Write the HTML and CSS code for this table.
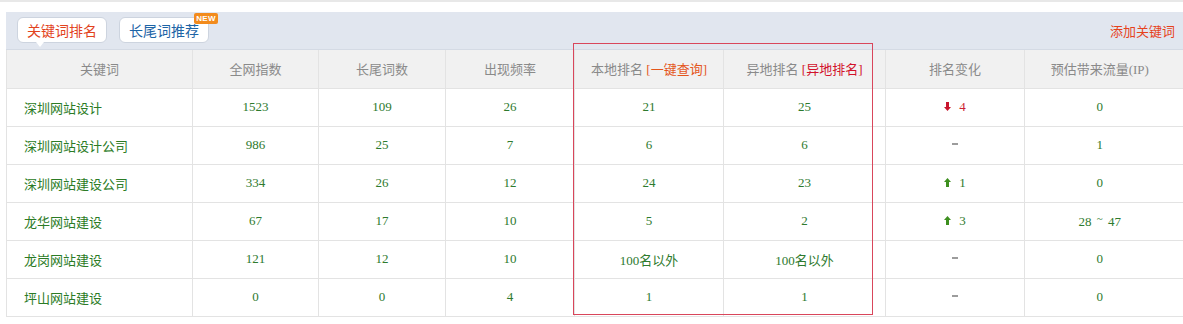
FILE: index.html
```html
<!DOCTYPE html>
<html lang="zh-CN">
<head>
<meta charset="utf-8">
<title>关键词排名</title>
<link rel="stylesheet" href="styles.css">
</head>
<body>
<div class="topbar"></div>
<div class="panel">
  <div class="tabbar">
    <div class="tabs">
      <a class="tab tab-active">关键词排名</a>
      <a class="tab tab-blue">长尾词推荐<span class="badge">NEW</span></a>
    </div>
    <a class="add-link">添加关键词</a>
  </div>
  <table class="rank">
    <colgroup>
      <col class="c1"><col class="c2"><col class="c3"><col class="c4"><col class="c5"><col class="c6"><col class="c7"><col class="c8">
    </colgroup>
    <thead>
      <tr>
        <th>关键词</th>
        <th>全网指数</th>
        <th>长尾词数</th>
        <th>出现频率</th>
        <th>本地排名 <span class="hl-orange">[一键查询]</span></th>
        <th>异地排名 <span class="hl-red">[异地排名]</span></th>
        <th>排名变化</th>
        <th class="last">预估带来流量(IP)</th>
      </tr>
    </thead>
    <tbody>
      <tr>
        <td class="kw">深圳网站设计</td><td>1523</td><td>109</td><td>26</td><td>21</td><td>25</td>
        <td><span class="chg down"><svg class="arrow" viewBox="0 0 7 9" width="7" height="9"><path d="M2 0H5V5H7L3.5 9L0 5H2Z"/></svg>4</span></td>
        <td class="last">0</td>
      </tr>
      <tr>
        <td class="kw">深圳网站设计公司</td><td>986</td><td>25</td><td>7</td><td>6</td><td>6</td>
        <td><span class="dash"></span></td>
        <td class="last">1</td>
      </tr>
      <tr>
        <td class="kw">深圳网站建设公司</td><td>334</td><td>26</td><td>12</td><td>24</td><td>23</td>
        <td><span class="chg up"><svg class="arrow" viewBox="0 0 7 9" width="7" height="9"><path d="M2 9H5V4H7L3.5 0L0 4H2Z"/></svg>1</span></td>
        <td class="last">0</td>
      </tr>
      <tr>
        <td class="kw">龙华网站建设</td><td>67</td><td>17</td><td>10</td><td>5</td><td>2</td>
        <td><span class="chg up"><svg class="arrow" viewBox="0 0 7 9" width="7" height="9"><path d="M2 9H5V4H7L3.5 0L0 4H2Z"/></svg>3</span></td>
        <td class="last">28 <span class="tilde">~</span> 47</td>
      </tr>
      <tr>
        <td class="kw">龙岗网站建设</td><td>121</td><td>12</td><td>10</td><td>100名以外</td><td>100名以外</td>
        <td><span class="dash"></span></td>
        <td class="last">0</td>
      </tr>
      <tr>
        <td class="kw">坪山网站建设</td><td>0</td><td>0</td><td>4</td><td>1</td><td>1</td>
        <td><span class="dash"></span></td>
        <td class="last">0</td>
      </tr>
    </tbody>
  </table>
  <div class="highlight"></div>
</div>
</body>
</html>
```

FILE: styles.css
```css
html, body {
  margin: 0;
  padding: 0;
  background: #ffffff;
}
body {
  font-family: "Noto Sans CJK SC", "Liberation Sans", sans-serif;
  font-size: 13px;
  overflow: hidden;
}
.topbar {
  height: 2px;
  background: #e8e8e8;
}
.panel {
  position: relative;
  margin: 10px 0 0 6px;
}
.tabbar {
  height: 38px;
  box-sizing: border-box;
  background: #e1e6ef;
  border-bottom: 1px solid #d4dae4;
  display: flex;
  justify-content: space-between;
  align-items: flex-start;
  padding: 5px 8px 0 11px;
}
.tabs {
  display: flex;
  gap: 12px;
}
.tab {
  position: relative;
  display: block;
  width: 90px;
  height: 26px;
  box-sizing: border-box;
  border: 1px solid #cdd4df;
  border-radius: 6px;
  background: #ffffff;
  text-align: center;
  font-size: 14px;
  line-height: 24px;
  cursor: pointer;
}
.tab-active {
  color: #e2431d;
}
.tab-active::after {
  content: "";
  position: absolute;
  left: 18px;
  bottom: -5px;
  border-left: 4px solid transparent;
  border-right: 4px solid transparent;
  border-top: 5px solid #ffffff;
}
.tab-blue {
  color: #1d64a6;
}
.badge {
  position: absolute;
  left: 74px;
  top: -5px;
  width: 24px;
  height: 11px;
  background: #f28b1d;
  border-radius: 2px;
  color: #ffffff;
  font-family: "Liberation Sans", sans-serif;
  font-size: 8px;
  font-weight: bold;
  line-height: 11px;
  text-align: center;
  letter-spacing: 0.3px;
}
.add-link {
  align-self: center;
  margin-top: -5px;
  color: #e6421b;
  font-size: 13px;
  cursor: pointer;
}
.rank {
  width: 1177px;
  table-layout: fixed;
  border-collapse: collapse;
  font-family: "Liberation Serif", "Noto Sans CJK SC", serif;
  font-size: 13px;
}
.c1 { width: 186px; }
.c2 { width: 126px; }
.c3 { width: 127px; }
.c4 { width: 129px; }
.c5 { width: 149px; }
.c6 { width: 162px; }
.c7 { width: 139px; }
.c8 { width: 159px; }
.rank th,
.rank td {
  height: 38px;
  padding: 0;
  box-sizing: border-box;
  text-align: center;
  vertical-align: middle;
  border-right: 1px solid #e3e3e3;
  border-bottom: 1px solid #e3e3e3;
  white-space: nowrap;
}
.rank th:first-child,
.rank td:first-child {
  border-left: 1px solid #e3e3e3;
}
.rank th {
  background: #f1f1f1;
  color: #8a8a8a;
  font-weight: normal;
}
.rank td {
  color: #2e7a2e;
}
.rank td.kw {
  text-align: left;
  padding-left: 17px;
  color: #2b7b25;
  font-family: "Noto Sans CJK SC", sans-serif;
}
.rank .last {
  border-right: none;
  padding-right: 9px;
}
.hl-orange {
  color: #e4561c;
}
.hl-red {
  color: #d2122b;
}
.chg {
  display: inline-flex;
  align-items: center;
  gap: 8px;
}
.chg.down {
  color: #cc1f33;
}
.chg.down .arrow {
  fill: #c8152d;
}
.chg.up {
  color: #2e7a2e;
}
.chg.up .arrow {
  fill: #3d8f1f;
}
.dash {
  display: inline-block;
  width: 6px;
  height: 2px;
  background: #9c9c9c;
  vertical-align: middle;
  margin-bottom: 4px;
}
.tilde {
  display: inline-block;
  vertical-align: 4px;
  margin: 0 2px;
  font-size: 11px;
}
.highlight {
  position: absolute;
  left: 567px;
  top: 31px;
  width: 300px;
  height: 272px;
  box-sizing: border-box;
  border: 1px solid #d9465b;
  pointer-events: none;
}
```
